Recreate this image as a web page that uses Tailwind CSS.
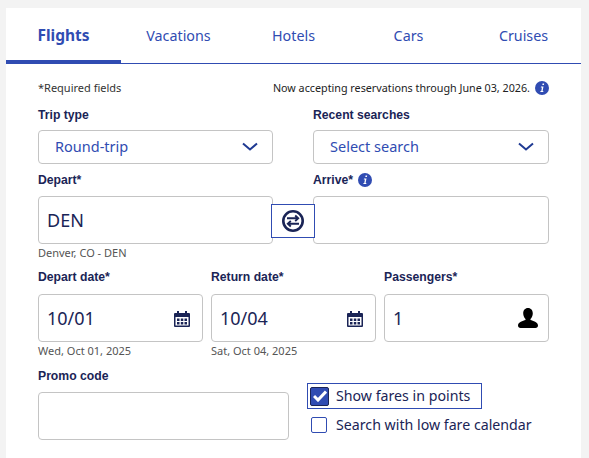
<!DOCTYPE html>
<html lang="en">
<head>
<meta charset="UTF-8">
<title>Book flights</title>
<script src="https://cdn.jsdelivr.net/npm/@tailwindcss/browser@4"></script>
</head>
<body class="bg-[#f3f3f3] h-[458px] overflow-hidden font-['Noto_Sans',sans-serif] text-[#1a2456]">
<div class="ml-[6px] mr-2 mt-2 h-[450px] bg-white">
  <!-- Tabs -->
  <div class="grid grid-cols-5 h-[56px] border-b border-[#304cb2] text-[#304cb2] text-[14.300px] text-center leading-6">
    <div class="h-[56px] border-b-4 border-[#304cb2] pt-[15px] font-bold text-[15.500px]">Flights</div>
    <div class="pt-[16px]">Vacations</div>
    <div class="pt-[16px]">Hotels</div>
    <div class="pt-[16px]">Cars</div>
    <div class="pt-[16px]">Cruises</div>
  </div>

  <div class="px-8">
    <!-- Notes -->
    <div class="flex justify-between items-center h-[18px] mt-[15px] text-[11px]">
      <span class="text-[#333]">*Required fields</span>
      <span class="flex items-center gap-[5px] text-[#222]"><span class="text-[10.750px]">Now accepting reservations through June 03, 2026.</span>
        <svg class="w-[14px] h-[14px]" viewBox="0 0 14 14"><circle cx="7" cy="7" r="7" fill="#304cb2"/><path d="M7.600 2.600h1.600l-.3 1.500H7.300zM6 5.400h2.500L7.600 10h.8l-.2 1H5.300l.2-1h.8l.6-3.600h-1.100z" fill="#fff"/></svg>
      </span>
    </div>

    <!-- Trip type / recent searches -->
    <div class="grid grid-cols-[235px_236px] gap-x-10 mt-[9px]">
      <label class="font-['Liberation_Sans',sans-serif] font-bold text-[12.200px] leading-[18px] h-[18px]">Trip type</label>
      <label class="font-['Liberation_Sans',sans-serif] font-bold text-[12.200px] leading-[18px] h-[18px]">Recent searches</label>
      <div class="mt-[6px] h-[34px] border border-[#c4c4c4] rounded-sm flex items-center justify-between pl-4 pr-[14px] text-[#304cb2] text-[14.500px]">Round-trip
        <svg class="w-[16px] h-[10px]" viewBox="0 0 16 10" fill="none" stroke="#1f3a93" stroke-width="2"><path d="M1 1.500l7 6 7-6"/></svg>
      </div>
      <div class="mt-[6px] h-[34px] border border-[#c4c4c4] rounded-sm flex items-center justify-between pl-4 pr-[14px] text-[#304cb2] text-[14.500px]">Select search
        <svg class="w-[16px] h-[10px]" viewBox="0 0 16 10" fill="none" stroke="#1f3a93" stroke-width="2"><path d="M1 1.500l7 6 7-6"/></svg>
      </div>
    </div>

    <!-- Depart / arrive -->
    <div class="relative grid grid-cols-[235px_236px] gap-x-10 mt-[7px]">
      <label class="font-['Liberation_Sans',sans-serif] font-bold text-[12.200px] leading-[18px] h-[18px]">Depart*</label>
      <label class="font-['Liberation_Sans',sans-serif] font-bold text-[12.200px] leading-[18px] h-[18px] flex items-center gap-[5px]">Arrive*
        <svg class="w-[14px] h-[14px]" viewBox="0 0 14 14"><circle cx="7" cy="7" r="7" fill="#304cb2"/><path d="M7.600 2.600h1.600l-.3 1.500H7.300zM6 5.400h2.500L7.600 10h.8l-.2 1H5.300l.2-1h.8l.6-3.600h-1.100z" fill="#fff"/></svg>
      </label>
      <div class="mt-[7px] h-[48px] border border-[#c4c4c4] rounded-sm flex items-center pl-2 text-[18px]">DEN</div>
      <div class="mt-[7px] h-[48px] border border-[#c4c4c4] rounded-sm"></div>
      <div class="text-[11px] text-[#555] leading-4 h-4 mt-[1px]">Denver, CO - DEN</div>
      <div class="absolute left-[233px] top-[33px] w-[44px] h-[34px] bg-white border border-[#304cb2] flex items-center justify-center">
        <svg class="w-[22px] h-[22px]" viewBox="0 0 22 22" fill="none" stroke="#1a2456"><circle cx="11" cy="11" r="9.700" stroke-width="2.600"/><path d="M5 8.300h11M13.200 5.500l3 2.800-3 2.800M17 13.700H6M8.800 10.900l-3 2.800 3 2.800" stroke-width="1.900"/></svg>
      </div>
    </div>

    <!-- Dates / passengers -->
    <div class="grid grid-cols-[165px_165px_165px] gap-x-2 mt-[7px]">
      <label class="font-['Liberation_Sans',sans-serif] font-bold text-[12.200px] leading-[18px] h-[18px]">Depart date*</label>
      <label class="font-['Liberation_Sans',sans-serif] font-bold text-[12.200px] leading-[18px] h-[18px]">Return date*</label>
      <label class="font-['Liberation_Sans',sans-serif] font-bold text-[12.200px] leading-[18px] h-[18px]">Passengers*</label>
      <div class="mt-[8px] h-[48px] border border-[#c4c4c4] rounded-sm flex items-center justify-between pl-2 pr-[12px] text-[18px]">10/01
        <svg class="w-[16px] h-[17px]" viewBox="0 0 16 17" fill="#1a2456"><path d="M1 3h2V1h2v2h6V1h2v2h2a1 1 0 0 1 1 1v12a1 1 0 0 1-1 1H1a1 1 0 0 1-1-1V4a1 1 0 0 1 1-1zm.500 4v8.500h13V7z"/><path d="M3 8.500h2.500V11H3zM6.800 8.500h2.500V11H6.800zM10.500 8.500H13V11h-2.500zM3 12h2.500v2.500H3zM6.800 12h2.500v2.500H6.800zM10.500 12H13v2.500h-2.500z"/></svg>
      </div>
      <div class="mt-[8px] h-[48px] border border-[#c4c4c4] rounded-sm flex items-center justify-between pl-2 pr-[12px] text-[18px]">10/04
        <svg class="w-[16px] h-[17px]" viewBox="0 0 16 17" fill="#1a2456"><path d="M1 3h2V1h2v2h6V1h2v2h2a1 1 0 0 1 1 1v12a1 1 0 0 1-1 1H1a1 1 0 0 1-1-1V4a1 1 0 0 1 1-1zm.500 4v8.500h13V7z"/><path d="M3 8.500h2.500V11H3zM6.800 8.500h2.500V11H6.800zM10.500 8.500H13V11h-2.500zM3 12h2.500v2.500H3zM6.800 12h2.500v2.500H6.800zM10.500 12H13v2.500h-2.500z"/></svg>
      </div>
      <div class="mt-[8px] h-[48px] border border-[#c4c4c4] rounded-sm flex items-center justify-between pl-2 pr-[10px] text-[18px]">1
        <svg class="w-[20px] h-[20px]" viewBox="0 0 20 20" fill="#000"><path d="M10 0c3 0 4.800 2.300 4.800 5.300 0 2.300-1 4.600-2.300 5.700v1c2.500 1 7.500 1.800 7.500 5.500 0 1.500-1 2.500-2.500 2.500h-15C1 20 0 19 0 17.500 0 13.800 5 13 7.500 12v-1C6.200 9.900 5.200 7.600 5.200 5.300 5.200 2.300 7 0 10 0z"/></svg>
      </div>
      <div class="text-[11px] text-[#555] leading-4 h-4 mt-[1px]">Wed, Oct 01, 2025</div>
      <div class="text-[11px] text-[#555] leading-4 h-4 mt-[1px]">Sat, Oct 04, 2025</div>
    </div>

    <!-- Promo code / options -->
    <div class="flex mt-[8px]">
      <div class="w-[251px]">
        <label class="block font-['Liberation_Sans',sans-serif] font-bold text-[12.200px] leading-[18px] h-[18px]">Promo code</label>
        <div class="mt-[7px] h-[48px] border border-[#c4c4c4] rounded-sm"></div>
      </div>
      <div class="ml-[18px] mt-[16px] text-[14.200px]">
        <div class="w-[175px] h-[26px] border border-[#304cb2] flex items-center pl-[2px] gap-[7px]">
          <span class="w-[19px] h-[19px] rounded-[2px] bg-[#304cb2] border border-[#1a2456] flex items-center justify-center">
            <svg class="w-[14px] h-[12px]" viewBox="0 0 14 12" fill="none" stroke="#fff" stroke-width="3"><path d="M1 6l4 4L13 1.500"/></svg>
          </span>
          Show fares in points
        </div>
        <div class="mt-[4px] h-[24px] flex items-center pl-[4px] gap-[9px]">
          <span class="w-4 h-4 rounded-[2px] border border-[#304cb2]"></span>
          Search with low fare calendar
        </div>
      </div>
    </div>
  </div>
</div>
</body>
</html>
